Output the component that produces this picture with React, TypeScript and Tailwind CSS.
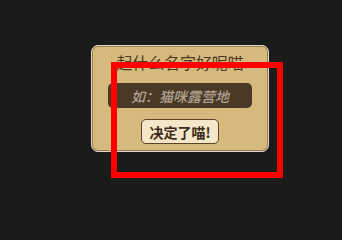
import { useState } from 'react';

// Name-your-camp dialog, with a red highlight box laid over it
export default function App() {
  const [name, setName] = useState('');

  return (
    <div
      className="relative w-screen h-screen min-h-[211px] overflow-hidden bg-[#1b1b1b] pl-[91px] pt-[45px]"
      style={{ fontFamily: '"Noto Sans CJK SC", "Noto Sans", sans-serif' }}
    >
      {/* Dialog card */}
      <div className="w-[178px] h-[107px] rounded-[7px] border-[1.5px] border-[#dcd6cb] bg-[#d5b97d] shadow-[inset_0_0_0_1px_#9b7c4e] flex flex-col items-center pt-[6px]">
        <h2 className="text-[16px] leading-[20px] text-[#4a3825] tracking-[-0.1px]">起什么名字好呢喵</h2>

        <input
          value={name}
          onChange={e => setName(e.target.value)}
          placeholder="如：猫咪露营地"
          className="mt-[11px] w-[144px] h-[25px] rounded-[5px] bg-[#4a3927] text-center text-[14px] font-medium italic text-[#efe2c4] placeholder:text-[#b0a392] outline-none"
        />

        <button className="mt-[11px] w-[78px] h-[25px] rounded-[5px] border-[1.5px] border-[#5b4229] bg-[#f3e7c7] text-[14px] leading-none font-bold text-[#3d2c1b]">
          决定了喵!
        </button>
      </div>

      {/* Red highlight overlay */}
      <div className="absolute left-[111px] top-[62px] w-[172px] h-[116px] border-[6px] border-[#ff0000] pointer-events-none" />
    </div>
  );
}
